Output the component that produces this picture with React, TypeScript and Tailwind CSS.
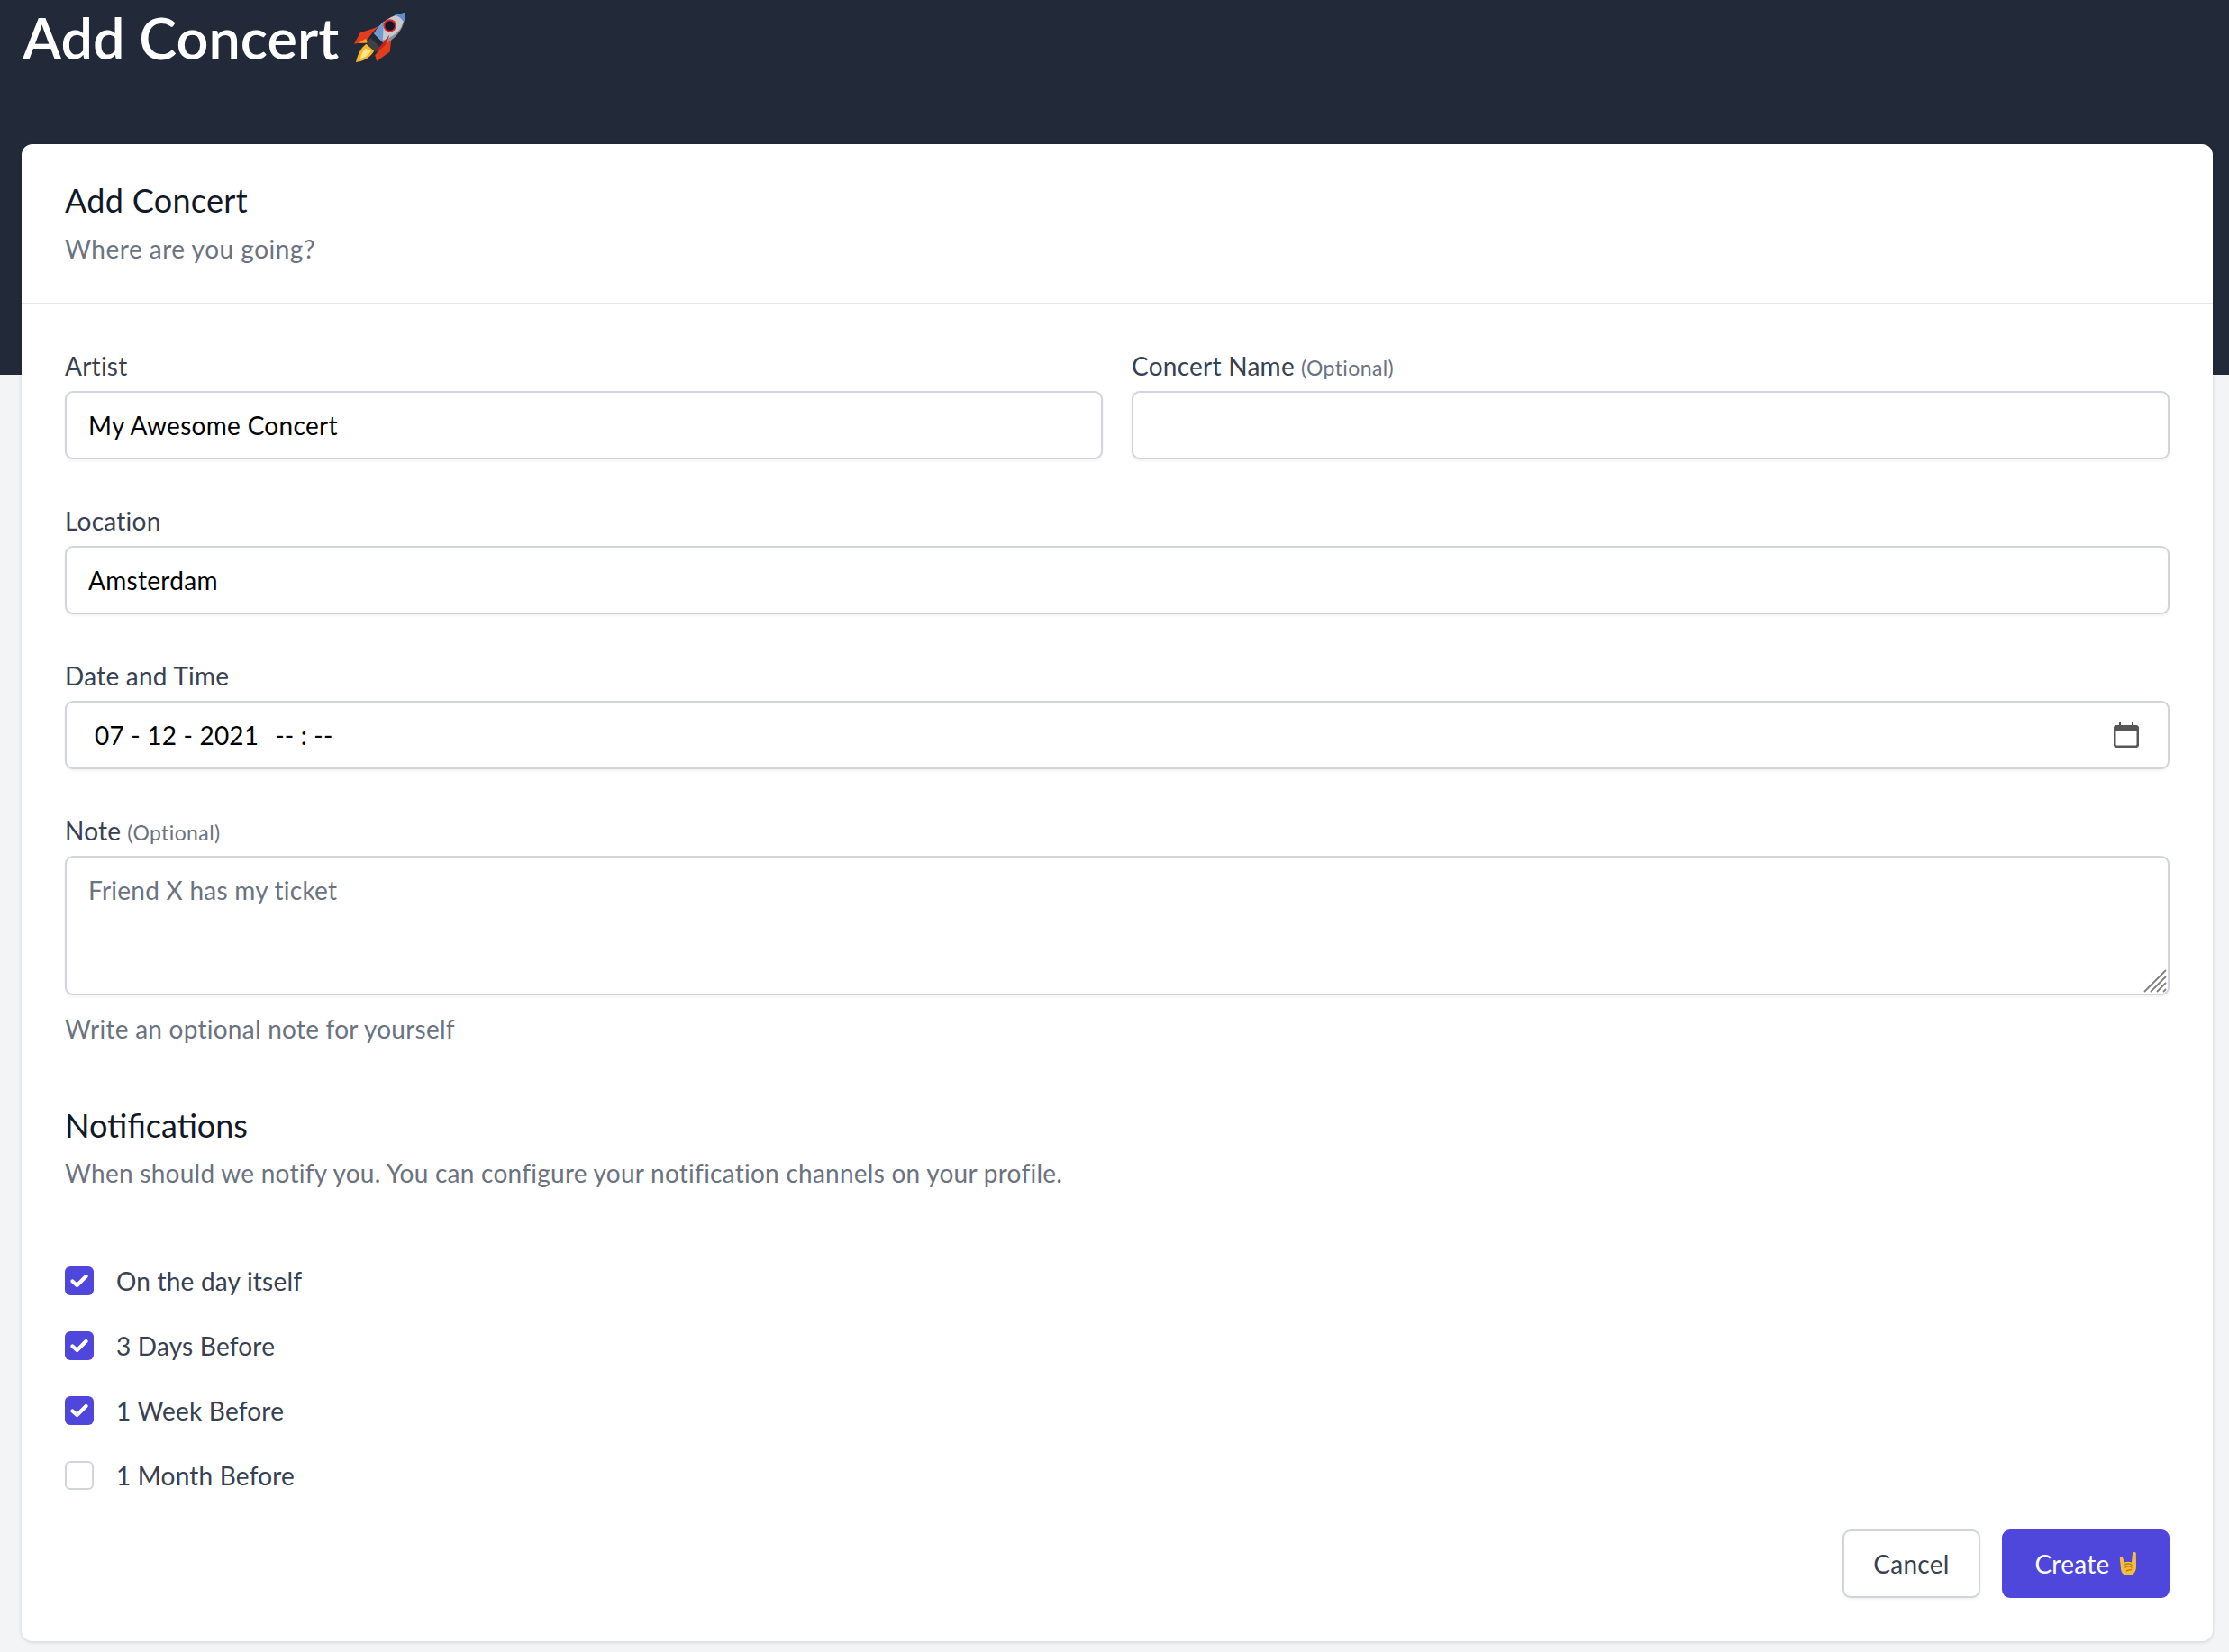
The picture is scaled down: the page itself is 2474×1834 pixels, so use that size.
const font = "font-['Lato','Open_Sans',sans-serif]";

function Rocket() {
  return (
    <svg width="60" height="58" viewBox="0 0 62 60" className="inline-block">
      <path d="M22 24 L30 16 L24 19 L8 24 L1 37 L14 35 Z" fill="#e23d1c" />
      <path d="M36 37 L44 30 L42 46 L27 57 L25 50 Z" fill="#e23d1c" />
      <path d="M6 36 L14 31 L18 36 Z" fill="#f7a21b" />
      <path d="M15 37 C8 42 5 50 3 58 C10 57 19 54 24 45 Z" fill="#f7b52a" />
      <path d="M14 42 C10 47 9 51 8 54 C13 53 18 50 20 45 Z" fill="#fde68a" />
      <path d="M20 30 L31 41 L26 46 L15 36 Z" fill="#3f3f46" />
      <path d="M24 25 C31 12 43 4 60 1 C58 18 50 30 36 37 Z" fill="#c7c9cc" />
      <path d="M24 25 C27 19 31 15 35 11 L34 32 L36 37 Z" fill="#6f9bd1" />
      <path d="M47 4 C51 3 56 2 60 1 C60 5 59 9 58 12 C56 8 52 5 47 4 Z" fill="#5b8fd0" />
      <path d="M36 37 C48 31 56 22 59 10 C55 22 46 29 33 33 Z" fill="#8d8f93" />
      <circle cx="42" cy="16" r="7.5" fill="#dc2626" />
      <circle cx="42" cy="16" r="5.5" fill="#111827" />
      <path d="M29 42 L42 26 L37 38 L27 47 Z" fill="#c81e1e" />
    </svg>
  );
}

function Horns() {
  return (
    <svg width="20" height="28" viewBox="0 0 20 28" className="inline-block">
      <path d="M15 2 C15.5 0.5 18.5 0.5 18.8 2 L19 17 C19 24 15 27 10 27 C5 27 2 24 2 19 L0.8 8 C0.6 6 3.6 5.4 4.2 7.5 L6 12.5 C8 11.5 11 11.5 14 12.5 Z" fill="#f6bd3b" />
      <path d="M6 15.5 C8 13.5 12 13.5 14.5 15.5 M6.5 18.5 C9 16.5 12 16.5 14.5 18.5 M8 22 C10 21 12 20.5 14 20.5" stroke="#b97a16" strokeWidth="1.4" fill="none" />
    </svg>
  );
}

function CalendarIcon() {
  return (
    <svg width="28" height="28" viewBox="0 0 28 28">
      <path d="M6 0 H8 V3 H20 V0 H22 V3 H25 C26.7 3 28 4.3 28 6 V25 C28 26.7 26.7 28 25 28 H3 C1.3 28 0 26.7 0 25 V6 C0 4.3 1.3 3 3 3 H6 Z M2.5 10 V24 C2.5 25 3 25.5 4 25.5 H24 C25 25.5 25.5 25 25.5 24 V10 Z" fill="#565656" fillRule="evenodd" />
    </svg>
  );
}

function Check() {
  return (
    <svg width="20" height="16" viewBox="0 0 20 16" fill="none">
      <path d="M2.5 8.5 L7.5 13 L17.5 3" stroke="white" strokeWidth="4.2" strokeLinecap="round" strokeLinejoin="round" />
    </svg>
  );
}

function Label({ text, optional }: { text: string; optional?: boolean }) {
  return (
    <label className="block h-[28px] text-[28px] leading-[28px] tracking-[0.25px] text-[#374151] mb-[14px]">
      {text}
      {optional && <span className="ml-[7px] text-[23px] tracking-[0.4px] text-[#6b7280]">(Optional)</span>}
    </label>
  );
}

const inputCls =
  "block w-full h-[76px] rounded-[9px] border-2 border-[#d1d5db] bg-white px-[24px] text-[28px] tracking-[0.3px] text-black shadow-[0_2px_3px_rgba(0,0,0,0.05)] outline-none";

function CheckRow({ text, checked }: { text: string; checked?: boolean }) {
  return (
    <label className="flex items-center h-[32px] gap-[25px]">
      <span
        className={
          checked
            ? "flex items-center justify-center w-[32px] h-[32px] rounded-[6px] bg-[#4f46dc]"
            : "block w-[32px] h-[32px] rounded-[6px] border-2 border-[#d1d5db] bg-white"
        }
      >
        {checked && <Check />}
      </span>
      <span className="text-[28px] tracking-[0.2px] text-[#374151]">{text}</span>
    </label>
  );
}

export default function App() {
  return (
    <div className={`${font} min-h-[1834px] bg-[#f3f4f6] overflow-hidden`}>
      <header className="h-[416px] bg-[#222a39] px-[25px]">
        <div className="flex items-center gap-[16px] pt-[10px]">
          <h1 className="text-[63px] leading-[64px] font-semibold text-white">Add Concert</h1>
          <Rocket />
        </div>
      </header>
      <main className="-mt-[256px] px-[24px] pr-[18px]">
        <div className="h-[1662px] rounded-[12px] bg-white shadow-[0_1px_4px_rgba(0,0,0,0.15)]">
          <div className="h-[178px] border-b-2 border-[#e5e7eb] px-[48px] pt-[40px]">
            <h2 className="text-[36px] leading-[44px] tracking-[0.3px] text-[#111827]">Add Concert</h2>
            <p className="mt-[16px] text-[28px] leading-[32px] tracking-[0.5px] text-[#6b7280]">Where are you going?</p>
          </div>
          <div className="px-[48px] pt-[54px]">
            <div className="grid grid-cols-2 gap-x-[32px]">
              <div>
                <Label text="Artist" />
                <input className={inputCls} defaultValue="My Awesome Concert" />
              </div>
              <div>
                <Label text="Concert Name" optional />
                <input className={inputCls} />
              </div>
            </div>
            <div className="mt-[54px]">
              <Label text="Location" />
              <input className={inputCls} defaultValue="Amsterdam" />
            </div>
            <div className="mt-[54px]">
              <Label text="Date and Time" />
              <div className={`${inputCls} flex items-center justify-between pr-[32px] pl-[31px]`}>
                <span className="whitespace-pre tracking-[0.2px]">
                  07 - 12 - 2021<span className="ml-[18px]">-- : --</span>
                </span>
                <CalendarIcon />
              </div>
            </div>
            <div className="mt-[54px]">
              <Label text="Note" optional />
              <div className="relative">
                <textarea
                  className="block w-full h-[155px] resize-none rounded-[9px] border-2 border-[#d1d5db] bg-white px-[24px] py-[18px] text-[28px] leading-[36px] tracking-[0.25px] text-black shadow-[0_2px_3px_rgba(0,0,0,0.05)] outline-none placeholder:text-[#6b7280]"
                  placeholder="Friend X has my ticket"
                />
                <svg width="26" height="26" viewBox="0 0 26 26" className="absolute right-[3px] bottom-[3px]">
                  <path d="M1 25 L25 1 M8 25 L25 8 M15 25 L25 15 M22 25 L25 22" stroke="#808080" strokeWidth="1.8" />
                </svg>
              </div>
              <p className="mt-[20px] text-[28px] leading-[34px] tracking-[0.25px] text-[#6b7280]">Write an optional note for yourself</p>
            </div>
            <h3 className="mt-[68px] text-[36px] leading-[44px] text-[#111827]">Notifications</h3>
            <p className="mt-[14px] text-[28px] leading-[34px] tracking-[0.25px] text-[#6b7280]">
              When should we notify you. You can configure your notification channels on your profile.
            </p>
            <div className="mt-[87px] flex flex-col gap-[40px]">
              <CheckRow text="On the day itself" checked />
              <CheckRow text="3 Days Before" checked />
              <CheckRow text="1 Week Before" checked />
              <CheckRow text="1 Month Before" />
            </div>
            <div className="flex justify-end gap-[24px] mt-[44px]">
              <button className="h-[76px] w-[153px] rounded-[9px] border-2 border-[#d1d5db] bg-white text-[28px] tracking-[0.25px] text-[#374151] shadow-[0_2px_3px_rgba(0,0,0,0.05)]">
                Cancel
              </button>
              <button className="flex items-center justify-center gap-[10px] h-[76px] w-[186px] rounded-[9px] bg-[#4f46dc] text-[28px] tracking-[0.25px] text-white">
                Create <Horns />
              </button>
            </div>
          </div>
        </div>
      </main>
    </div>
  );
}
